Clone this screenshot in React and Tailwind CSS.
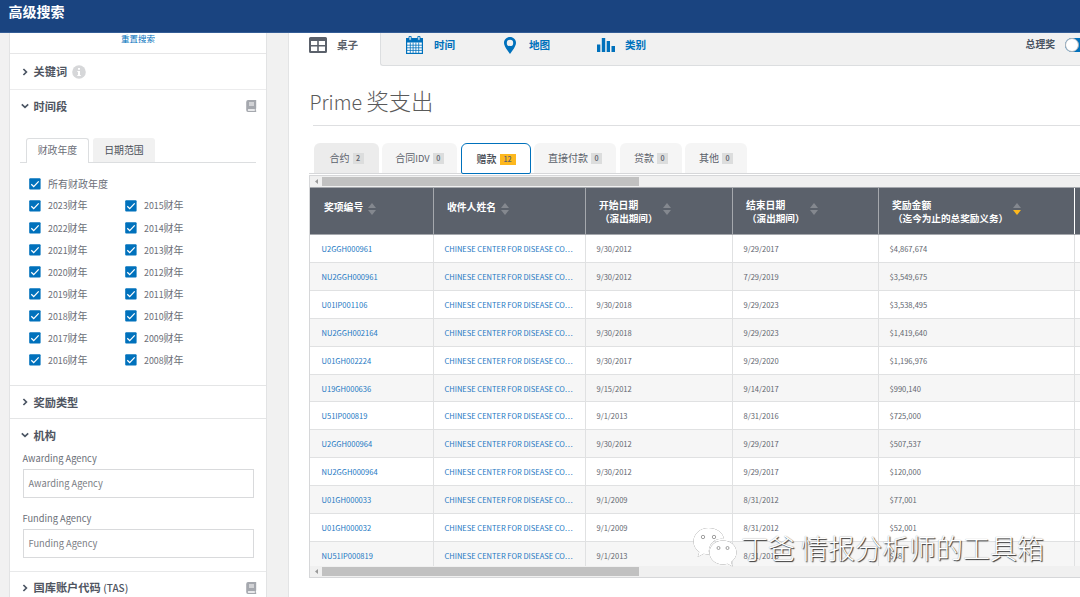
import React from "react";

const years = [
  [2023, 2015], [2022, 2014], [2021, 2013], [2020, 2012],
  [2019, 2011], [2018, 2010], [2017, 2009], [2016, 2008],
];

const rows = [
  ["U2GGH000961", "9/30/2012", "9/29/2017", "$4,867,674"],
  ["NU2GGH000961", "9/30/2012", "7/29/2019", "$3,549,675"],
  ["U01IP001106", "9/30/2018", "9/29/2023", "$3,538,495"],
  ["NU2GGH002164", "9/30/2018", "9/29/2023", "$1,419,640"],
  ["U01GH002224", "9/30/2017", "9/29/2020", "$1,196,976"],
  ["U19GH000636", "9/15/2012", "9/14/2017", "$990,140"],
  ["U51IP000819", "9/1/2013", "8/31/2016", "$725,000"],
  ["U2GGH000964", "9/30/2012", "9/29/2017", "$507,537"],
  ["NU2GGH000964", "9/30/2012", "9/29/2017", "$120,000"],
  ["U01GH000033", "9/1/2009", "8/31/2012", "$77,001"],
  ["U01GH000032", "9/1/2009", "8/31/2012", "$52,001"],
  ["NU51IP000819", "9/1/2013", "8/31/2016", "$48"],
];

const columns = "grid grid-cols-[123px_152px_147px_146px_196px_20px]";

function Chevron({ open }) {
  return (
    <svg className="mr-[5px] h-2 w-2 shrink-0" viewBox="0 0 8 8" fill="none" stroke="#4b5563" strokeWidth="1.7">
      <path d={open ? "M.8 2.4 4 5.4 7.2 2.4" : "M2.4 1 5.4 4 2.4 7"} />
    </svg>
  );
}

function Book() {
  return (
    <svg className="ml-auto h-3 w-[11px]" viewBox="0 0 11 12">
      <path fill="#a5a8ae" fillRule="evenodd" d="M2 0h8.2v8.5l-.4.4v1.7h.4V12H2Q.2 11.8.2 10V2Q.4.2 2 0ZM3 2.5v1h5v-1Zm0 2v1h5v-1ZM2.2 9.2q-1 .8 0 1.5h6.6V9.2Z" />
    </svg>
  );
}

function Section({ title, open, book, info, className }) {
  return (
    <div className={"flex shrink-0 items-center pl-[10.5px] pr-[9px] text-[11.2px] font-bold text-[#4f5561] " + className}>
      <Chevron open={open} />
      <span className="-mt-px leading-4">{title}</span>
      {info && (
        <svg className="ml-[5px] h-[14px] w-[14px]" viewBox="0 0 14 14">
          <circle cx="7" cy="7" r="6.8" fill="#d6d7d9" />
          <path d="M6 3h2v1.7H6ZM5.3 6H8v4h.8v1.1H5.3V10H6V7h-.7Z" fill="#fff" />
        </svg>
      )}
      {book && <Book />}
    </div>
  );
}

function Check({ year, all }) {
  return (
    <div className="flex h-[22.05px] w-24 items-center whitespace-nowrap text-[10px] text-[#6b6e77]">
      <svg className="mr-[7px] h-3 w-3 shrink-0" viewBox="0 0 12 12">
        <rect x=".2" y=".2" width="11.4" height="11.4" rx="1" fill="#0071bc" />
        <path d="m2.3 6.2 2.4 2.4 5-5.2" fill="none" stroke="#fff" strokeWidth="1.3" />
      </svg>
      {all ? <span className="-mt-px">所有财政年度</span> : <span className="-mt-px"><span className="text-[8.8px]">{year}</span>财年</span>}
    </div>
  );
}

function Sidebar() {
  return (
    <aside className="flex h-full w-[258px] flex-col border-x border-[#e2e3e4] bg-white">
      <div className="flex h-[21px] shrink-0 justify-center border-b border-[#e6e6e7] text-[8.5px] leading-[10px] text-[#0071bc]">重置搜索</div>
      <Section title="关键词" info className="h-9 border-b border-[#ececed]" />
      <Section title="时间段" open book className="h-8" />
      <div className="mx-[10px] mt-4 flex h-[25px] shrink-0 gap-1 border-b border-[#dcdee0] pl-[6px] text-[9.9px] leading-[14px]">
        <div className="flex h-[25px] w-[63px] items-center justify-center rounded-t-[3px] border border-b-0 border-[#dcdee0] bg-white pb-[2px] text-[#6b6e77]">财政年度</div>
        <div className="flex h-6 w-[62px] items-center justify-center rounded-t-[3px] bg-[#f1f1f1] pb-px text-[#4b4f58]">日期范围</div>
      </div>
      <div className="flex h-[223px] shrink-0 flex-col border-b border-[#e4e5e6] pl-[19px] pt-[9.5px]">
        <Check all />
        {years.map(([a, b]) => (
          <div key={a} className="flex"><Check year={a} /><Check year={b} /></div>
        ))}
      </div>
      <Section title="奖励类型" className="h-[33px] border-b border-[#e4e5e6]" />
      <Section title="机构" open className="h-[32px]" />
      <div className="h-[121px] shrink-0 border-b border-[#e8e9ea] px-[12.5px] text-[9.3px] text-[#6b6f78]">
        <div className="h-[18px] leading-[14px]">Awarding Agency</div>
        <div className="h-[29px] w-[231px] border border-[#d9dadc] pl-[5px] leading-[27px] text-[#7b7e85]">Awarding Agency</div>
        <div className="mt-[13px] h-[18px] leading-[14px]">Funding Agency</div>
        <div className="h-[29px] w-[231px] border border-[#d9dadc] pl-[5px] leading-[27px] text-[#7b7e85]">Funding Agency</div>
      </div>
      <Section title={<>国库账户代码 <span className="text-[10px] font-medium">(TAS)</span></>} book className="h-8" />
    </aside>
  );
}

function Tab({ label, count, active, className }) {
  return (
    <div className={"flex items-center justify-center gap-[3px] rounded-t-[6px] pt-px text-[10px] " + className}>
      <span className="-mt-px leading-4">{label}</span>
      <span className={"flex h-[11px] items-center justify-center text-[7.2px] font-medium text-[#5b616b] " + (active ? "w-4 bg-[#fdb81e]" : "w-[11px] bg-[#dcdddd]")}>{count}</span>
    </div>
  );
}

function Sort({ active, className }) {
  return (
    <svg className={"h-3 w-2 shrink-0 " + className} viewBox="0 0 8 12">
      <path d="M0 5 4 0l4 5Z" fill="#84888f" />
      <path d="M0 7h8l-4 5Z" fill={active ? "#fdb81e" : "#84888f"} />
    </svg>
  );
}

function HeadCell({ title, sub, active }) {
  return (
    <div className="flex border-l border-[#a5a8ad] pl-[13px] text-[9.8px] font-bold text-white first:border-l-0 first:pl-[14px]">
      <div className={sub ? "pt-[11px] leading-[13px]" : "pt-3 leading-[14px]"}>
        <div>{title}</div>
        {sub && <div className="pl-[1px] text-[9.6px]">{sub}</div>}
      </div>
      <Sort active={active} className="ml-[5px] mt-[15px]" />
    </div>
  );
}

function Scrollbar({ className }) {
  return (
    <div className={"flex shrink-0 items-center bg-[#f0f0f0] " + className}>
      <svg className="ml-[5px] h-[5px] w-[3px]" viewBox="0 0 3 5"><path d="M3 0v5L0 2.5Z" fill="#999" /></svg>
      <div className="ml-1 h-[9px] w-[317px] bg-[#c1c1c1]" />
    </div>
  );
}

function NavItem({ icon, label, className }) {
  return (
    <div className={"flex h-6 items-center text-[10.6px] font-bold " + className}>
      {icon}
      <span className="-mt-px leading-4">{label}</span>
    </div>
  );
}

function Main() {
  return (
    <main className="flex h-full w-[792px] flex-col overflow-hidden border-l border-[#e3e4e5] bg-white">
      <div className="flex h-[33px] shrink-0">
        <div className="w-[91px] pl-5">
          <NavItem
            label="桌子"
            className="text-[#5b616b]"
            icon={
              <svg className="mr-[10px] h-4 w-[18px]" viewBox="0 0 18 16">
                <path fill="#5b616b" fillRule="evenodd" d="M1.5 0h15Q18 0 18 1.5v13q0 1.500-1.500 1.500h-15Q0 16 0 14.500v-13Q0 0 1.500 0ZM2 4v4h6.200V4Zm7.800 0v4H16V4ZM2 9.500V14h6.200V9.500Zm7.800 0V14H16V9.500Z" />
              </svg>
            }
          />
        </div>
        <div className="flex flex-1 rounded-bl-[3px] border-b border-l border-[#dcdee0] bg-[#f1f1f1] text-[#0071bc]">
          <NavItem
            label="时间"
            className="ml-[25px] w-[98px]"
            icon={
              <svg className="mr-[11px] h-[18px] w-[17px]" viewBox="0 0 17 18">
                <path fill="#0071bc" d="M0 2h17v16H0Z" />
                <path fill="#fff" d="M1.200 6.500h14.600v10.300H1.200Z" />
                <path stroke="#0071bc" strokeWidth=".8" d="M1 9.200h15M1 11.800h15M1 14.400h15M4.300 6.500V17M7.100 6.500V17M9.900 6.500V17M12.700 6.500V17" />
                <path fill="#f1f1f1" stroke="#0071bc" strokeWidth=".9" d="M3 .5h2.200v3.800H3ZM11.800.5H14v3.800h-2.200Z" />
              </svg>
            }
          />
          <NavItem
            label="地图"
            className="w-[93px]"
            icon={
              <svg className="mr-[13px] h-[17px] w-3" viewBox="0 0 12 17">
                <path fill="#0071bc" fillRule="evenodd" d="M6 0c3.300 0 6 2.500 6 5.800 0 2-1 3.600-2.100 5.600L6 17l-3.900-5.600C1 9.400 0 7.800 0 5.800 0 2.500 2.700 0 6 0Zm0 2.700a3.200 3.200 0 1 0 0 6.400 3.200 3.200 0 0 0 0-6.400Z" />
              </svg>
            }
          />
          <NavItem
            label="类别"
            icon={
              <svg className="mr-[10px] h-[14px] w-[18px]" viewBox="0 0 18 14">
                <path fill="#0071bc" d="M0 6.500h3.300V14H0ZM4.800 0h3.400v14H4.800ZM9.700 3H13v11H9.700ZM14.500 8H18v6h-3.500Z" />
              </svg>
            }
          />
          <div className="ml-auto flex h-6 items-center text-[9.8px] font-bold text-[#4b5563]">
            <span className="-mt-px">总理奖</span>
            <div className="ml-[10px] w-[15px] overflow-hidden">
              <div className="h-[14px] w-7 rounded-full bg-[#0071bc]">
                <div className="h-[14px] w-[14px] rounded-full border border-[#b0b3b8] bg-white" />
              </div>
            </div>
          </div>
        </div>
      </div>
      <div className="ml-[24px] h-[60px] shrink-0 border-b border-[#dedfe1]">
        <h1 className="-ml-[3.5px] pt-[19px] text-[22.3px] font-light leading-[30px] text-[#5a5a5a]">
          <span className="text-[19.7px]">Prime </span>奖支出
        </h1>
      </div>
      <div className="ml-5 mt-[17px] flex h-[31px] shrink-0 border-b border-[#d6d7d9] pl-[5px] text-[#5b616b]">
        <Tab label="合约" count="2" className="mr-[3px] w-[65px] bg-[#ececec]" />
        <Tab label={<>合同<span className="text-[9.3px]">IDV</span></>} count="0" className="mr-1 w-[75px] bg-[#f5f5f5]" />
        <Tab label={<span className="font-medium text-[#3d434c]">赠款</span>} count="12" active className="-mb-px mr-[3px] w-[70px] rounded-b-[2px] border-[1.5px] border-[#0071bc] bg-white" />
        <Tab label="直接付款" count="0" className="mr-1 w-[82px] bg-[#f5f5f5]" />
        <Tab label="贷款" count="0" className="mr-[3px] w-[62px] bg-[#f5f5f5]" />
        <Tab label="其他" count="0" className="w-[62px] bg-[#f5f5f5]" />
      </div>
      <div className="ml-5 mt-px flex h-[403px] shrink-0 flex-col border-b border-l border-t border-[#d6d7d9]">
        <Scrollbar className="h-[11px]" />
        <div className={columns + " h-12 shrink-0 border-b border-t border-[#a5a8ad] bg-[#5b616b]"}>
          <HeadCell title="奖项编号" />
          <HeadCell title="收件人姓名" />
          <HeadCell title="开始日期" sub="（演出期间）" />
          <HeadCell title="结束日期" sub="（演出期间）" />
          <HeadCell title="奖励金额" sub="（迄今为止的总奖励义务）" active />
          <div className="border-l border-white" />
        </div>
        <div className="h-[331px] shrink-0 overflow-hidden">
          {rows.map(([id, start, end, amount], i) => (
            <div key={id} className={columns + " h-[27.92px] border-b border-[#e0e1e2] text-[7.55px] leading-[27px] text-[#62666f] *:border-l *:border-[#e0e1e2] *:pl-[10.5px] *:first:border-l-0 *:first:pl-[11.5px] " + (i % 2 ? "bg-[#f6f6f6]" : "bg-white")}>
              <div className="text-[#2378c3]">{id}</div>
              <div className="whitespace-nowrap text-[7.5px] text-[#2378c3]">CHINESE CENTER FOR DISEASE CO…</div>
              <div>{start}</div>
              <div>{end}</div>
              <div>{amount}</div>
              <div />
            </div>
          ))}
        </div>
        <Scrollbar className="h-[11px]" />
      </div>
    </main>
  );
}

function Watermark() {
  return (
    <div className="absolute left-[693px] top-[525px] flex items-center">
      <svg className="h-[41px] w-[45px] [filter:drop-shadow(0.6px_0.8px_0.5px_#555)]" viewBox="0 0 45 41">
        <path fill="#fff" d="M15.500 2C7 2 .5 8 .5 15.500c0 4.500 2.300 8 5.800 10.400L4.700 31l6-3.200c1.700.5 3.500.8 5.500.7A12.500 12.500 0 0 1 31 13C30 6.500 23.500 2 15.500 2Z" />
        <path fill="#fff" d="M30 14.500c-7.700 0-13.500 5.300-13.500 12S22.300 38.500 30 38.500c1.600 0 3-.3 4.500-.7l5 2.700-1.300-4.600c3.200-2.300 5.300-5.600 5.300-9.400 0-6.700-5.800-12-13.500-12Z" />
        <g fill="#fff" stroke="#888" strokeWidth=".8"><circle cx="10" cy="11" r="1.700" /><circle cx="21" cy="11" r="1.700" /><circle cx="25.500" cy="22" r="1.500" /><circle cx="34.500" cy="22" r="1.500" /></g>
      </svg>
      <span className="ml-[3px] mt-1 whitespace-nowrap text-[27px] font-light leading-[38px] text-white [text-shadow:1px_1px_1px_#333,0_0_1px_#999]">丁爸 情报分析师的工具箱</span>
    </div>
  );
}

export default function App() {
  return (
    <div className="relative flex h-[597px] w-[1080px] flex-col overflow-hidden bg-[#f1f1f1] font-['Noto_Sans_CJK_SC','Noto_Sans',sans-serif]">
      <header className="h-[33px] shrink-0 border-b border-[#345d96] bg-[#1a4480] pl-[8.5px] text-[14px] font-bold leading-[23px] text-white">高级搜索</header>
      <div className="flex h-[564px] justify-between pl-[9px]">
        <Sidebar />
        <Main />
      </div>
      <Watermark />
    </div>
  );
}
